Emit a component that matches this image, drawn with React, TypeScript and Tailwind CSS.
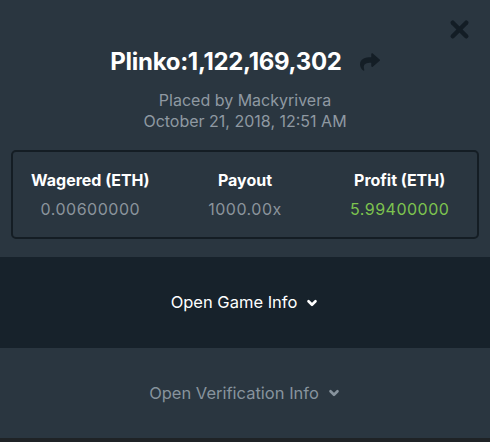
import { X, ChevronDown } from 'lucide-react';

const ShareIcon = () => (
    <svg viewBox="0 0 512 512" className="w-[20px] h-[20px] fill-[#141e26]">
        <path d="M503.7 189.8 327.7 37.9C312.3 24.5 288 35.3 288 56v80.1C127.4 137.9 0 170.1 0 322.3c0 61.4 39.6 122.3 83.3 154.1 13.7 9.9 33.1-2.5 28.1-18.6C66.1 312.8 132.9 274.3 288 272.1V360c0 20.7 24.3 31.5 39.7 18.2l176-152c11.1-9.6 11.1-26.8 0-36.4z" />
    </svg>
);

const stats = [
    { label: 'Wagered (ETH)', value: '0.00600000', tone: 'text-[#8b949c]' },
    { label: 'Payout', value: '1000.00x', tone: 'text-[#8b949c]' },
    { label: 'Profit (ETH)', value: '5.99400000', tone: 'text-[#7dc34f]' },
];

export default function App() {
    return (
        <div className="w-[490px] h-[442px] bg-[#2a3640] flex flex-col font-['Inter',sans-serif] overflow-hidden">
            {/* Kepala: judul + tutup */}
            <div className="relative h-[150px] pt-[46px] flex flex-col items-center">
                <button className="absolute right-[17px] top-[16px] text-[#131d25]">
                    <X size={27} strokeWidth={4} />
                </button>
                <div className="flex items-center gap-[18px]">
                    <h1 className="text-[24px] leading-[32px] font-bold text-white tracking-[-0.3px]">Plinko:1,122,169,302</h1>
                    <ShareIcon />
                </div>
                <p className="mt-[12px] text-[16px] leading-[21px] text-[#8f99a2]">Placed by Mackyrivera</p>
                <p className="text-[16px] leading-[21px] text-[#8f99a2]">October 21, 2018, 12:51 AM</p>
            </div>

            {/* Kotak statistik */}
            <div className="mx-[11px] h-[89px] rounded-[5px] border-2 border-[#141d24] grid grid-cols-3 items-center">
                {stats.map((s) => (
                    <div key={s.label} className="flex flex-col items-center gap-[9px]">
                        <span className="text-[16px] leading-[20px] font-bold text-white">{s.label}</span>
                        <span className={`text-[16px] leading-[20px] tracking-[0.5px] ${s.tone}`}>{s.value}</span>
                    </div>
                ))}
            </div>

            <div className="mt-[18px] h-[91px] bg-[#17222b] flex items-center justify-center gap-[8px] text-white text-[16.5px]">
                Open Game Info
                <ChevronDown size={14} strokeWidth={4.5} />
            </div>

            <div className="h-[90px] flex items-center justify-center gap-[8px] text-[#87939d] text-[16.5px]">
                Open Verification Info
                <ChevronDown size={14} strokeWidth={4.5} />
            </div>

            <div className="flex-1 bg-[#1f2326]" />
        </div>
    );
}
